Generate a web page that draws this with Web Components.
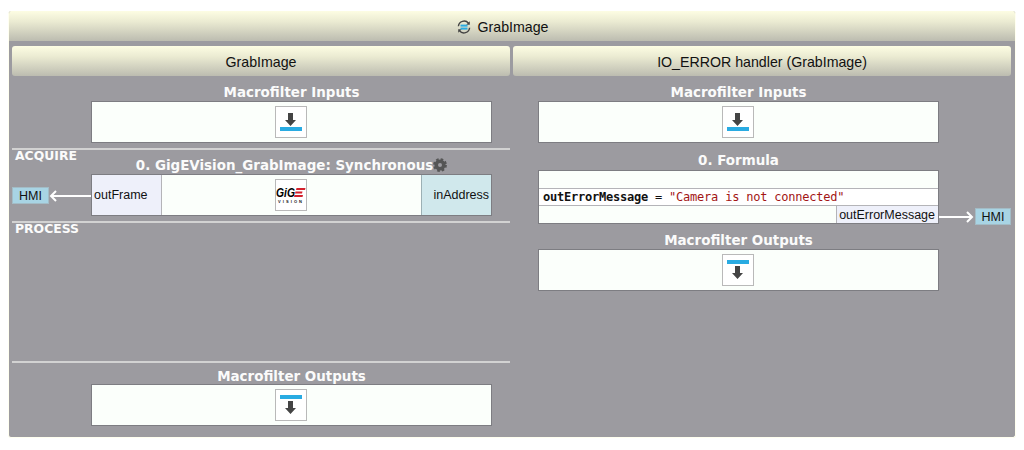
<!DOCTYPE html>
<html>
<head>
<meta charset="utf-8">
<title>GrabImage</title>
<style>
  html, body { margin: 0; background: #fff; }
  body { padding: 11px 8px 0; font-family: "Liberation Sans", Arial, sans-serif; }
</style>
</head>
<body>

<macro-panel title-text="GrabImage">
  <macro-column slot="left" heading="GrabImage" left="79" right="18">
    <macro-block label="Macrofilter Inputs" label-height="25" label-pad="8"><io-icon kind="in"></io-icon></macro-block>
    <section-rule label="ACQUIRE"></section-rule>
    <macro-block label="0. GigEVision_GrabImage: Synchronous" label-height="24" label-pad="7" gear flush>
      <hmi-tag slot="left" dir="in"></hmi-tag>
      <filter-row><span slot="out">outFrame</span><gige-icon></gige-icon><span slot="in">inAddress</span></filter-row>
    </macro-block>
    <section-rule label="PROCESS" height="133"></section-rule>
    <section-rule></section-rule>
    <macro-block label="Macrofilter Outputs" label-height="21" label-pad="5"><io-icon kind="out"></io-icon></macro-block>
  </macro-column>

  <macro-column slot="right" heading="IO_ERROR handler (GrabImage)" left="25" right="72">
    <macro-block label="Macrofilter Inputs" label-height="25" label-pad="8"><io-icon kind="in"></io-icon></macro-block>
    <macro-block label="0. Formula" label-height="27" label-pad="7" flush>
      <formula-body out="outErrorMessage"></formula-body>
      <hmi-tag slot="right" dir="out"></hmi-tag>
    </macro-block>
    <macro-block label="Macrofilter Outputs" label-height="25" label-pad="8"><io-icon kind="out"></io-icon></macro-block>
  </macro-column>
</macro-panel>

<script>
const barGradient = 'linear-gradient(to bottom, #fdfde3 0%, #ebebd2 35%, #bcbcb0 100%)'

class MacroPanel extends HTMLElement {
  constructor() {
    super()
    this.attachShadow({ mode: 'open' })
    this.shadowRoot.innerHTML = `
    <style>
      :host { display: block; height: 427px; box-sizing: border-box; background: #9c9ba0;
        border: 1px solid #fffff0; border-top: 0; border-radius: 3px; color: #111; overflow: hidden; }
      .title { height: 30px; display: flex; align-items: center; justify-content: center; gap: 7px;
        background: ${barGradient}; font-size: 14.2px; padding: 2px 19px 0 0; box-sizing: border-box; }
      .title svg { display: block; margin-top: -1px; }
      .cols { display: flex; gap: 3px; padding: 5px 4px 0 3px; }
      ::slotted(*) { flex: 0 0 498px; }
    </style>
    <div class="title">
      <svg width="14" height="14" viewBox="0 0 14 14" fill="none">
        <path d="M1.4 6.2A5.7 5.7 0 0 1 11.5 3.2" stroke="#444" stroke-width="1.4"/>
        <path d="M12.6 7.8A5.7 5.7 0 0 1 2.5 10.8" stroke="#444" stroke-width="1.4"/>
        <path d="M12.8 1.2v3.6H9.2zM1.2 12.8V9.2h3.6z" fill="#444"/>
        <rect x="3.5" y="4.6" width="7" height="2" fill="#29abe2"/>
        <rect x="3.5" y="7.6" width="7" height="2" fill="#29abe2"/>
      </svg>
      <span>${this.getAttribute('title-text')}</span>
    </div>
    <div class="cols"><slot name="left"></slot><slot name="right"></slot></div>`
  }
}

class MacroColumn extends HTMLElement {
  constructor() {
    super()
    this.attachShadow({ mode: 'open' })
    this.style.setProperty('--gutter-left', this.getAttribute('left') + 'px')
    this.style.setProperty('--gutter-right', this.getAttribute('right') + 'px')
    this.shadowRoot.innerHTML = `
    <style>
      :host { display: flex; flex-direction: column; }
      .head { height: 30px; display: flex; align-items: center; justify-content: center;
        background: ${barGradient}; border-radius: 3px; font-size: 14.2px; padding-top: 1px; box-sizing: border-box; }
    </style>
    <div class="head">${this.getAttribute('heading')}</div>
    <slot></slot>`
  }
}

class MacroBlock extends HTMLElement {
  constructor() {
    super()
    this.attachShadow({ mode: 'open' })
    const gear = this.hasAttribute('gear') ? `
      <svg class="gear" width="14" height="14" viewBox="0 0 14 14">
        <circle cx="7" cy="7" r="3.8" fill="none" stroke="#555" stroke-width="3.6"/>
        <circle cx="7" cy="7" r="5.8" fill="none" stroke="#555" stroke-width="2.2" stroke-dasharray="2.55 2"/>
      </svg>` : ''
    this.shadowRoot.innerHTML = `
    <style>
      :host { display: grid; grid-template-columns: var(--gutter-left) 401px var(--gutter-right); }
      .label { grid-column: 2; box-sizing: border-box; height: ${this.getAttribute('label-height')}px;
        padding-top: ${this.getAttribute('label-pad')}px; display: flex; align-items: center; justify-content: center;
        color: #fbfbfb; font: bold 13.45px "DejaVu Sans", sans-serif; white-space: nowrap; }
      .gear { flex: none; margin-top: -1px; }
      .body { grid-column: 2; box-sizing: border-box; border: 1px solid #7d7d82; background: #fbfffb;
        min-height: 42px; display: flex; align-items: center; justify-content: center; }
      .body.flush { display: block; }
      .side { display: flex; align-items: flex-end; min-width: 0; }
      .l { grid-column: 1; grid-row: 2; }
      .r { grid-column: 3; grid-row: 2; }
    </style>
    <div class="label"><span>${this.getAttribute('label')}</span>${gear}</div>
    <div class="side l"><slot name="left"></slot></div>
    <div class="body${this.hasAttribute('flush') ? ' flush' : ''}"><slot></slot></div>
    <div class="side r"><slot name="right"></slot></div>`
  }
}

class SectionRule extends HTMLElement {
  constructor() {
    super()
    this.attachShadow({ mode: 'open' })
    const label = this.getAttribute('label') || ''
    this.shadowRoot.innerHTML = `
    <style>
      :host { display: block; margin-top: 5px; }
      .line { height: 2px; background: #d2d2d2; }
      .text { color: #fbfbfb; font: bold 12.4px "DejaVu Sans", sans-serif; padding-left: 3px;
        height: ${this.getAttribute('height') || 0}px; line-height: 12px; }
    </style>
    <div class="line"></div>
    <div class="text">${label}</div>`
  }
}

class IoIcon extends HTMLElement {
  constructor() {
    super()
    this.attachShadow({ mode: 'open' })
    this.shadowRoot.innerHTML = `
    <style>
      :host { display: block; width: 32px; height: 32px; margin-right: 1px; }
      svg { display: block; }
    </style>
    <svg width="32" height="32" viewBox="0 0 32 32">
      <rect x=".5" y=".5" width="31" height="31" fill="#fff" stroke="#b9b9b9"/>
      ${this.getAttribute('kind') === 'in'
        ? `<path d="M13 7h5v7h3l-5.500 6-5.500-6h3z" fill="#444"/><rect x="5" y="21" width="22" height="4" fill="#29abe2"/>`
        : `<rect x="5" y="6" width="22" height="4" fill="#29abe2"/><path d="M13 12h5v7h3l-5.500 6-5.500-6h3z" fill="#444"/>`}
    </svg>`
  }
}

class GigeIcon extends HTMLElement {
  constructor() {
    super()
    this.attachShadow({ mode: 'open' })
    this.shadowRoot.innerHTML = `
    <style>
      :host { display: block; width: 32px; height: 32px; box-sizing: border-box; border: 1px solid #b9b9b9;
        background: #fff; margin-right: 1px; }
      svg { display: block; }
    </style>
    <svg width="30" height="30" viewBox="0 0 30 30">
      <text x="0" y="17" font-family="Liberation Sans" font-weight="bold" font-style="italic" font-size="13" textLength="19" lengthAdjust="spacingAndGlyphs" fill="#000">GiG</text>
      <path d="M20.500 8h9l-.5 2h-9zM19.500 11.500h7l-.5 2h-7zM18.500 15h8.500l-.5 2h-8.500z" fill="#d4202c"/>
      <text x="2" y="23" font-family="Liberation Sans" font-weight="bold" font-size="4" textLength="24" fill="#111">VISION</text>
    </svg>`
  }
}

class FilterRow extends HTMLElement {
  constructor() {
    super()
    this.attachShadow({ mode: 'open' })
    this.shadowRoot.innerHTML = `
    <style>
      :host { display: grid; grid-template-columns: 70px 1fr 70px; height: 40px; font-size: 12.500px; color: #111; }
      .cell { display: flex; align-items: center; padding: 0 2px; }
      .out { background: #eef0fa; border-right: 1px solid #b4b4b8; }
      .in { background: #d0e8ec; border-left: 1px solid #9cb0b4; justify-content: flex-end; }
      .mid { justify-content: center; }
    </style>
    <div class="cell out"><slot name="out"></slot></div>
    <div class="cell mid"><slot></slot></div>
    <div class="cell in"><slot name="in"></slot></div>`
  }
}

class FormulaBody extends HTMLElement {
  constructor() {
    super()
    this.attachShadow({ mode: 'open' })
    this.shadowRoot.innerHTML = `
    <style>
      :host { display: block; }
      .top { height: 17px; border-bottom: 1px solid #b4b4b8; }
      .code { height: 16px; border-bottom: 1px solid #b4b4b8; background: #fff; display: flex; align-items: center;
        padding-left: 4px; font: 12px "DejaVu Sans Mono", monospace; letter-spacing: -.22px; color: #111; white-space: pre; }
      .code b { font-weight: bold; }
      .code i { font-style: normal; color: #a31515; }
      .bottom { height: 17px; display: flex; justify-content: flex-end; }
      .port { background: #eef0fa; border-left: 1px solid #b4b4b8; font-size: 12.500px; color: #111; padding: 0 3px 0 2px;
        display: flex; align-items: center; }
    </style>
    <div class="top"></div>
    <div class="code"><b>outErrorMessage</b> = <i>"Camera is not connected"</i></div>
    <div class="bottom"><div class="port">${this.getAttribute('out')}</div></div>`
  }
}

class HmiTag extends HTMLElement {
  constructor() {
    super()
    this.attachShadow({ mode: 'open' })
    const incoming = this.getAttribute('dir') === 'in'
    const arrow = incoming
      ? `<svg width="42" height="12" viewBox="0 0 42 12" fill="none" stroke="#fff" stroke-width="2"><path d="M42 6H2M7 1 2 6l5 5"/></svg>`
      : `<svg width="36" height="12" viewBox="0 0 36 12" fill="none" stroke="#fff" stroke-width="2"><path d="M0 6h33M28 1l5 5-5 5"/></svg>`
    const tag = `<div class="tag">HMI</div>`
    this.shadowRoot.innerHTML = `
    <style>
      :host { display: flex; align-items: center; width: 100%; }
      .tag { flex: 1 1 auto; height: 17px; box-sizing: border-box; border: 1px solid #a3bcc6; background: #a8d4e4;
        font-size: 12.500px; color: #111; display: flex; align-items: center; justify-content: center; padding-top: 1px; }
      svg { display: block; flex: none; }
    </style>
    ${incoming ? tag + arrow : arrow + tag}`
    this.style.marginBottom = incoming ? '12px' : '-1px'
  }
}

customElements.define('macro-panel', MacroPanel)
customElements.define('macro-column', MacroColumn)
customElements.define('macro-block', MacroBlock)
customElements.define('section-rule', SectionRule)
customElements.define('io-icon', IoIcon)
customElements.define('gige-icon', GigeIcon)
customElements.define('filter-row', FilterRow)
customElements.define('formula-body', FormulaBody)
customElements.define('hmi-tag', HmiTag)
</script>
</body>
</html>
